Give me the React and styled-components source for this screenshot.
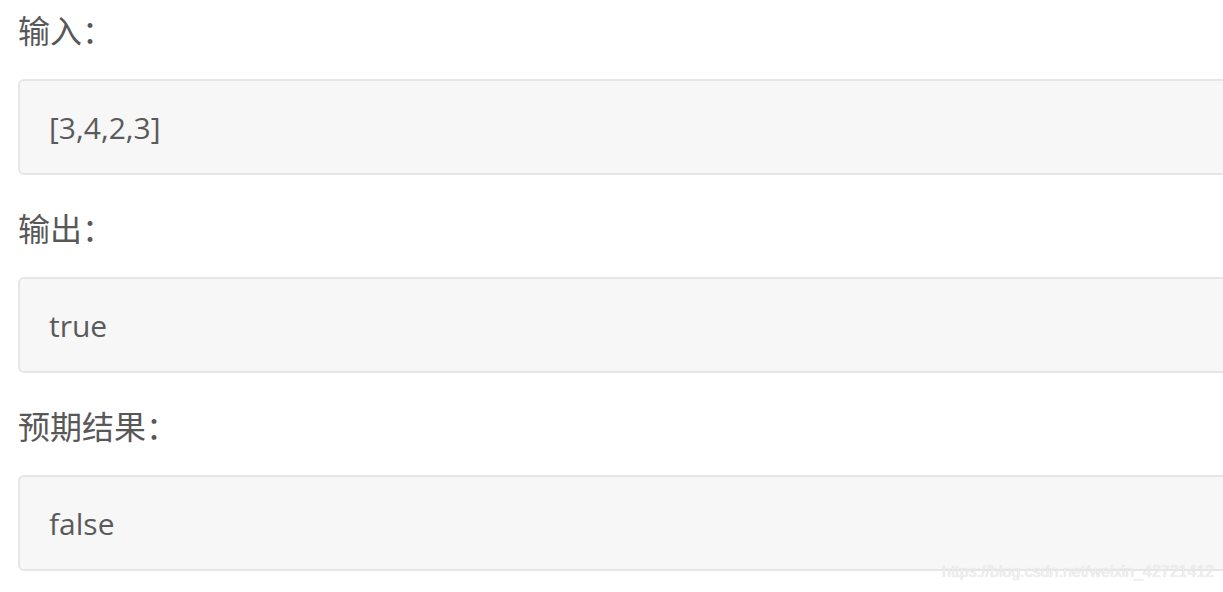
import React from "react";
import styled, { createGlobalStyle } from "styled-components";

const Global = createGlobalStyle`
  html, body {
    margin: 0;
    padding: 0;
    background: #ffffff;
    overflow: hidden;
  }
  body {
    font-family: "Open Sans", "Noto Sans CJK SC", sans-serif;
    color: #555555;
  }
`;

const Page = styled.div`
  position: relative;
  width: 1223px;
  height: 592px;
  padding: 4px 0 0 18px;
  box-sizing: border-box;
  overflow: hidden;
`;

const Section = styled.section`
  display: flex;
  flex-direction: column;
  margin-bottom: 27px;
`;

const Label = styled.div`
  font-family: "Noto Sans CJK SC", sans-serif;
  font-size: 32px;
  line-height: 50px;
  height: 50px;
  color: #585858;
`;

const Box = styled.div`
  margin-top: 25px;
  width: 1240px;
  height: 96px;
  box-sizing: border-box;
  background: #f7f7f7;
  border: 2px solid #e6e6e6;
  border-radius: 6px;
  display: flex;
  align-items: center;
  padding-left: 29px;
  font-family: "Open Sans", sans-serif;
  font-size: 30px;
  color: #5a5a5a;
`;

const Watermark = styled.div`
  position: absolute;
  left: 942px;
  top: 563px;
  font-family: "Liberation Sans", Arial, sans-serif;
  font-size: 16px;
  color: #f0f0f0;
  text-shadow: 0 0 1px #cfcfcf;
  white-space: nowrap;
`;

const items = [
  { label: "输入：", value: "[3,4,2,3]" },
  { label: "输出：", value: "true" },
  { label: "预期结果：", value: "false" },
];

export default function App() {
  return (
    <>
      <Global />
      <Page>
        {items.map((it) => (
          <Section key={it.label}>
            <Label>{it.label}</Label>
            <Box>{it.value}</Box>
          </Section>
        ))}
        <Watermark>https://blog.csdn.net/weixin_42721412</Watermark>
      </Page>
    </>
  );
}
